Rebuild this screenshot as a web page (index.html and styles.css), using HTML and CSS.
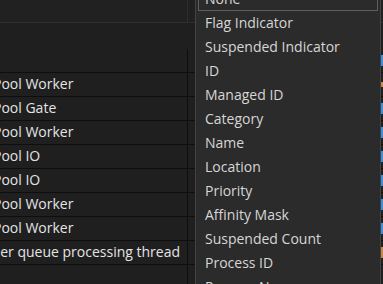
FILE: index.html
```html
<!DOCTYPE html>
<html lang="en">
  <head>
    <meta charset="UTF-8" />
    <meta name="viewport" content="width=device-width, initial-scale=1.0" />
    <title>Threads</title>

    <link rel="stylesheet" href="styles.css">
  </head>
  <body>
    <div class="window">
      <!-- Toolbar strip -->
      <div class="toolbar">
        <div class="toolbar-left"></div>
        <div class="toolbar-right"></div>
      </div>

      <div class="spacer"></div>

      <!-- Thread grid (scrolled right a little) -->
      <div class="grid">
        <div class="grid-head">
          <div class="cell name-col"></div>
          <div class="cell rest-col"><span class="mark blue"></span></div>
        </div>
        <div class="row">
          <div class="cell name-col">Pool Worker</div>
          <div class="cell rest-col"><span class="mark orange small"></span></div>
        </div>
        <div class="row">
          <div class="cell name-col">Pool Gate</div>
          <div class="cell rest-col"><span class="mark blue"></span></div>
        </div>
        <div class="row">
          <div class="cell name-col">Pool Worker</div>
          <div class="cell rest-col"><span class="mark blue"></span></div>
        </div>
        <div class="row">
          <div class="cell name-col">Pool IO</div>
          <div class="cell rest-col"><span class="mark blue"></span></div>
        </div>
        <div class="row">
          <div class="cell name-col">Pool IO</div>
          <div class="cell rest-col"><span class="mark blue"></span></div>
        </div>
        <div class="row">
          <div class="cell name-col">Pool Worker</div>
          <div class="cell rest-col"><span class="mark blue"></span></div>
        </div>
        <div class="row">
          <div class="cell name-col">Pool Worker</div>
          <div class="cell rest-col"><span class="mark blue"></span></div>
        </div>
        <div class="row">
          <div class="cell name-col long">Timer queue processing thread</div>
          <div class="cell rest-col"><span class="mark orange"></span></div>
        </div>
        <div class="row">
          <div class="cell name-col"></div>
          <div class="cell rest-col"></div>
        </div>
      </div>

      <!-- Group-by dropdown list -->
      <ul class="menu">
        <li class="menu-item selected">None</li>
        <li class="menu-item">Flag Indicator</li>
        <li class="menu-item">Suspended Indicator</li>
        <li class="menu-item">ID</li>
        <li class="menu-item">Managed ID</li>
        <li class="menu-item">Category</li>
        <li class="menu-item">Name</li>
        <li class="menu-item">Location</li>
        <li class="menu-item">Priority</li>
        <li class="menu-item">Affinity Mask</li>
        <li class="menu-item">Suspended Count</li>
        <li class="menu-item">Process ID</li>
        <li class="menu-item">Process Name</li>
      </ul>
    </div>
  </body>
</html>
```

FILE: styles.css
```css
body {
  margin: 0;
  padding: 0;
  background-color: #1f1f1f;
  font-family: "Segoe UI", "Open Sans", sans-serif;
  font-size: 14px;
  color: #e4e4e4;
  overflow: hidden;
}

.window {
  position: relative; /* anchor for the dropdown */
  width: 383px;
  height: 284px;
  overflow: hidden;
}

.toolbar {
  display: flex;
  height: 22px;
  border-bottom: 1px solid #2e2e2e;
  background-color: #212121;
}

.toolbar-left {
  width: 187px;
  border-right: 1px solid #2e2e2e;
}

.toolbar-right {
  flex: 1;
}

.spacer {
  height: 26px;
}

.grid {
  margin-left: -12px;
}

.grid-head,
.row {
  display: flex;
  border-bottom: 1px solid #0e0e0e;
}

.grid-head {
  height: 23px;
}

.row {
  height: 23px;
}

.cell {
  box-sizing: border-box;
  padding-left: 5px;
  line-height: 22px;
  white-space: nowrap;
  overflow: hidden;
}

.name-col {
  width: 200px;
  border-right: 1px solid #0e0e0e;
}

.name-col.long {
  text-indent: -17px;
}

.rest-col {
  flex: 1;
  display: flex;
  justify-content: flex-end;
  align-items: center;
}

.mark {
  width: 2px;
  height: 11px;
}

.mark.blue {
  background-color: #3f8fd8;
}

.mark.orange {
  background-color: #c8874a;
}

.mark.small {
  height: 5px;
}

/* Dropdown */
.menu {
  position: absolute;
  top: -14px;
  left: 195px;
  width: 186px;
  box-sizing: border-box;
  margin: 0;
  padding: 0;
  list-style: none;
  background-color: #2b2b2b;
  border: 1px solid #434343;
  color: #d6d6d6;
}

.menu-item {
  box-sizing: border-box;
  height: 24px;
  line-height: 24px;
  margin: 0 2px;
  padding-left: 7px;
  white-space: nowrap;
}

.menu-item.selected {
  border: 1px solid #5e5e5e;
  line-height: 22px;
  padding-left: 6px;
}
```
